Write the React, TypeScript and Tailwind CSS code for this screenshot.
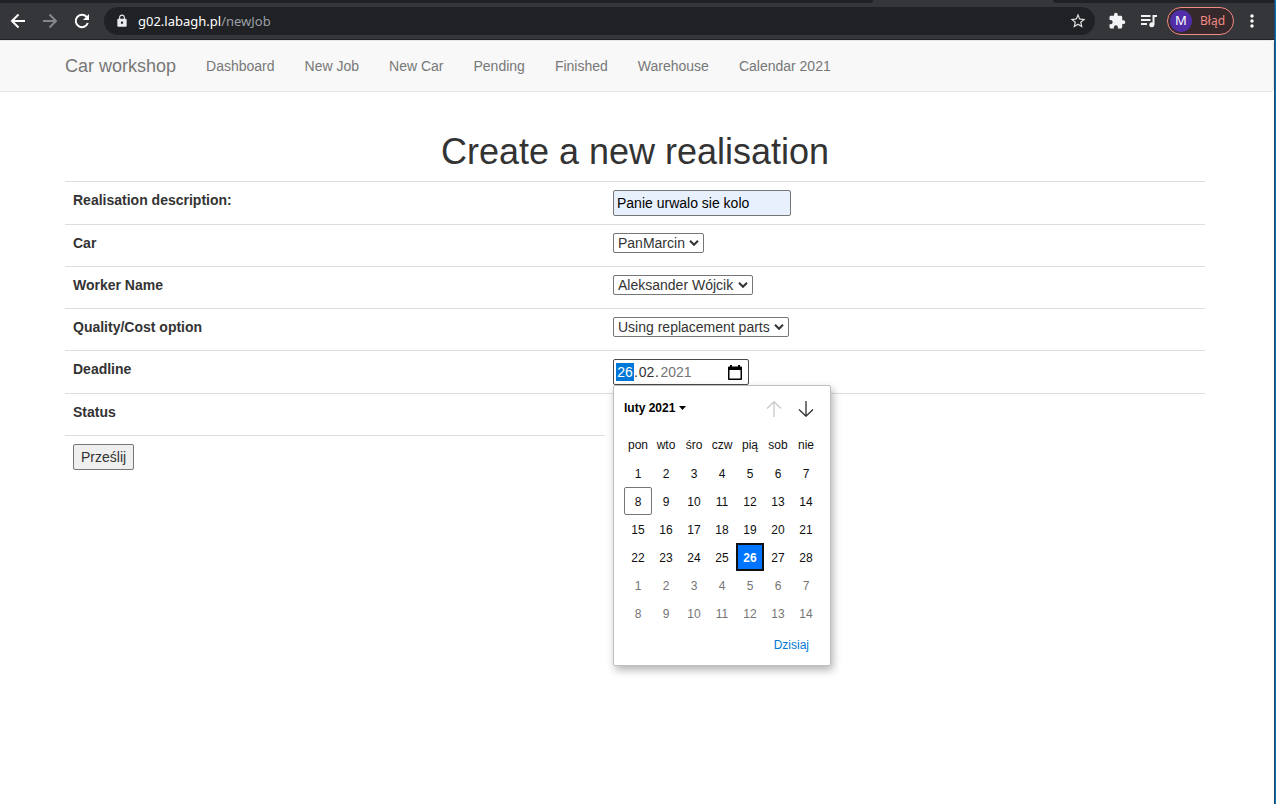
import { useState } from "react";
import type { ReactNode } from "react";
import { MdExtension, MdLock, MdMoreVert, MdStarOutline } from "react-icons/md";

const NAV = ["Dashboard", "New Job", "New Car", "Pending", "Finished", "Warehouse", "Calendar 2021"];
const WEEKDAYS = ["pon", "wto", "śro", "czw", "pią", "sob", "nie"];
const TODAY = 8;

function LineIcon({ children }: { children: ReactNode }) {
  return (
    <svg viewBox="0 0 20 20" className="size-5" fill="none" stroke="currentColor" strokeWidth="2">
      {children}
    </svg>
  );
}

function BrowserBar() {
  return (
    <header className="font-['Noto_Sans','Open_Sans',sans-serif]">
      <div className="flex h-[3px] bg-[#35363a]">
        <div className="grow rounded-br-md bg-[#202124]" />
        <div className="w-[180px]" />
        <div className="w-[221px] rounded-bl-md bg-[#202124]" />
      </div>
      <div className="flex h-[37px] items-center border-b border-[#202124] bg-[#35363a] pr-3 pl-2 text-white">
        <button type="button" aria-label="Back">
          <LineIcon>
            <path d="M17 10H4.500M10.500 3.500L4 10l6.500 6.500" />
          </LineIcon>
        </button>
        <button type="button" aria-label="Forward" className="ml-3 text-[#85868a]">
          <LineIcon>
            <path d="M3 10h12.500M9.500 3.500L16 10l-6.500 6.500" />
          </LineIcon>
        </button>
        <button type="button" aria-label="Reload" className="ml-3">
          <LineIcon>
            <path d="M15.800 12A6.200 6.200 0 1 1 14.600 5.800" />
            <path d="M17 3v6h-6z" fill="currentColor" stroke="none" />
          </LineIcon>
        </button>
        <div className="ml-3 flex h-7 grow items-center rounded-full bg-[#202124] pr-2 pl-[11px]">
          <MdLock className="size-3.5 text-[#e8eaed]" />
          <div className="ml-2 grow px-px text-[13px] leading-5">
            g02.labagh.pl<span className="text-[#9aa0a6]">/newJob</span>
          </div>
          <button type="button" aria-label="Bookmark" className="text-[#e0e1e3]">
            <MdStarOutline className="size-[18px]" />
          </button>
        </div>
        <button type="button" aria-label="Extensions" className="ml-[13px] text-[#f1f3f4]">
          <MdExtension className="size-[18px]" />
        </button>
        <button type="button" aria-label="Media" className="ml-3 text-[#f1f3f4]">
          <LineIcon>
            <path d="M3 5h9.500M3 9h9.500M3 13h6" strokeWidth="1.800" />
            <path d="M15.500 13.500V5H19" />
            <circle cx="13.800" cy="13.800" r="2.500" fill="currentColor" stroke="none" />
          </LineIcon>
        </button>
        <button
          type="button"
          className="ml-[9px] flex h-7 w-[67px] items-center rounded-full border border-[#f28b82] bg-[#35292c] pl-0.5 text-xs text-[#f28b82]"
        >
          <span className="flex size-[22px] items-center justify-center rounded-full bg-[#512da8] text-[13px] text-white">
            M
          </span>
          <span className="ml-2">Błąd</span>
        </button>
        <button type="button" aria-label="Menu" className="ml-2">
          <MdMoreVert className="size-5" />
        </button>
      </div>
    </header>
  );
}

function DatePopup({ day, onPick }: { day: number; onPick: (day: number) => void }) {
  const weeks = [0, 1, 2, 3, 4, 5].map((w) => WEEKDAYS.map((_, d) => w * 7 + d + 1));
  return (
    <div className="absolute top-full left-0 z-10 h-[281px] w-[218px] rounded-xs border border-[#bfbfbf] bg-white px-2.5 text-xs text-[#101010] shadow-[2px_4px_8px_rgba(0,0,0,0.3)]">
      <div className="flex h-[45px] items-center justify-between">
        <button type="button" className="flex items-center gap-1 pb-0.5 font-bold text-black">
          luty 2021
          <svg viewBox="0 0 7 4" className="h-1 w-[7px]" fill="currentColor">
            <path d="M0 0h7L3.500 4z" />
          </svg>
        </button>
        <div className="flex gap-4 pr-1.5">
          <button type="button" aria-label="Previous month" className="text-[#c8c8c8]">
            <svg viewBox="0 0 16 16" className="size-4" fill="none" stroke="currentColor" strokeWidth="1.300">
              <path d="M8 16V1M1 7.500L8 0.800l7 6.700" />
            </svg>
          </button>
          <button type="button" aria-label="Next month" className="text-[#303030]">
            <svg viewBox="0 0 16 16" className="size-4" fill="none" stroke="currentColor" strokeWidth="1.300">
              <path d="M8 0v15M1 8.500l7 6.700 7-6.700" />
            </svg>
          </button>
        </div>
      </div>
      <table className="border-collapse">
        <thead>
          <tr>
            {WEEKDAYS.map((name) => (
              <th key={name} className="h-7 w-7 p-0 text-center font-normal">
                {name}
              </th>
            ))}
          </tr>
        </thead>
        <tbody>
          {weeks.map((week) => (
            <tr key={week[0]}>
              {week.map((n) => {
                const other = n > 28;
                let look = "";
                if (other) look = "text-[#757575]";
                else if (n === day) look = "border-2 border-[#101010] bg-[#0075ff] font-bold text-white";
                else if (n === TODAY) look = "rounded-xs border border-[#767676]";
                return (
                  <td key={n} className="p-0">
                    <button
                      type="button"
                      disabled={other}
                      onClick={() => onPick(n)}
                      className={`flex size-7 items-center justify-center pt-0.5 ${look}`}
                    >
                      {other ? n - 28 : n}
                    </button>
                  </td>
                );
              })}
            </tr>
          ))}
        </tbody>
      </table>
      <div className="flex h-9 items-center justify-end pr-[11px]">
        <button type="button" onClick={() => onPick(TODAY)} className="text-[#0078d4]">
          Dzisiaj
        </button>
      </div>
    </div>
  );
}

function DateField() {
  const [day, setDay] = useState(26);
  const part = "h-[18px] p-0 text-center leading-[18px] outline-none";
  return (
    <div className="relative w-[136px]">
      <div className="flex h-[26px] items-center rounded-xs border border-[#484848] bg-white px-0.5">
        <input
          id="deadline"
          aria-label="Day"
          value={String(day).padStart(2, "0")}
          readOnly
          className={`${part} w-[18px] bg-[#0078d7] text-white`}
        />
        <span className="w-1 text-center">.</span>
        <input aria-label="Month" value="02" readOnly className={`${part} w-[17px]`} />
        <span className="w-1 text-center">.</span>
        <input aria-label="Year" value="2021" readOnly className={`${part} w-[34px] text-[#757575]`} />
        <button type="button" aria-label="Open calendar" className="ml-auto pr-1 text-black">
          <svg viewBox="0 0 14 15" className="h-[15px] w-3.5" fill="currentColor">
            <path d="M2 0h2v1.500h6V0h2v1.500h1a1 1 0 0 1 1 1V14a1 1 0 0 1-1 1H1a1 1 0 0 1-1-1V2.500a1 1 0 0 1 1-1h1zM1.500 5v8.500h11V5z" />
          </svg>
        </button>
      </div>
      <DatePopup day={day} onPick={setDay} />
    </div>
  );
}

function Select({ id, option, width }: { id: string; option: string; width: string }) {
  return (
    <div className={`relative ${width}`}>
      <select
        id={id}
        className="block h-5 w-full appearance-none rounded-xs border border-[#767676] bg-white pl-1 leading-[18px]"
      >
        <option>{option}</option>
      </select>
      <svg
        viewBox="0 0 10 6"
        className="pointer-events-none absolute top-[7px] right-[5px] h-1.5 w-2.5"
        fill="none"
        stroke="#333"
        strokeWidth="2"
      >
        <path d="M1 0.800l4 4 4-4" />
      </svg>
    </div>
  );
}

function Row({ label, htmlFor, tall, children }: { label: string; htmlFor?: string; tall?: boolean; children?: ReactNode }) {
  return (
    <tr className={tall ? "h-[43px]" : "h-[42px]"}>
      <th className="border-t border-[#ddd] px-2 pt-2 text-left align-top leading-5 font-bold">
        {htmlFor ? <label htmlFor={htmlFor}>{label}</label> : label}
      </th>
      <td className="border-t border-[#ddd] px-2 pt-2 align-top">{children}</td>
    </tr>
  );
}

export default function App() {
  return (
    <div className="min-h-screen border-r border-[#0a6fb0] font-['Liberation_Sans',Arial,sans-serif] text-sm leading-5 text-[#333]">
      <div className="min-h-screen border-r border-[#1b4a6b] bg-white">
        <BrowserBar />
        <nav className="flex h-[52px] items-center rounded-r border border-l-0 border-[#e7e7e7] bg-[#f8f8f8] pl-[65px] text-[#777]">
          <a href="#home" className="pr-[15px] text-lg leading-5">
            Car workshop
          </a>
          {NAV.map((item) => (
            <a key={item} href="#page" className="px-[15px]">
              {item}
            </a>
          ))}
        </nav>
        <main className="pt-10 pr-[69px] pl-[65px]">
          <h1 className="mb-2.5 text-center text-4xl leading-[39px]">Create a new realisation</h1>
          <form onSubmit={(e) => e.preventDefault()}>
            <table className="w-full table-fixed border-separate border-spacing-0">
              <colgroup>
                <col className="w-[540px]" />
                <col />
              </colgroup>
              <tbody>
                <Row label="Realisation description:" htmlFor="description" tall>
                  <input
                    id="description"
                    defaultValue="Panie urwalo sie kolo"
                    className="block h-[26px] w-[178px] rounded-xs border border-[#767676] bg-[#e8f0fe] px-[3px] text-black"
                  />
                </Row>
                <Row label="Car" htmlFor="car">
                  <Select id="car" option="PanMarcin" width="w-[91px]" />
                </Row>
                <Row label="Worker Name" htmlFor="worker">
                  <Select id="worker" option="Aleksander Wójcik" width="w-[140px]" />
                </Row>
                <Row label="Quality/Cost option" htmlFor="quality">
                  <Select id="quality" option="Using replacement parts" width="w-[176px]" />
                </Row>
                <Row label="Deadline" htmlFor="deadline" tall>
                  <DateField />
                </Row>
                <Row label="Status" />
                <tr>
                  <td className="border-t border-[#ddd] p-2">
                    <button
                      type="submit"
                      className="block h-[26px] rounded-xs border border-[#767676] bg-[#efefef] px-[7px]"
                    >
                      Prześlij
                    </button>
                  </td>
                </tr>
              </tbody>
            </table>
          </form>
        </main>
      </div>
    </div>
  );
}
